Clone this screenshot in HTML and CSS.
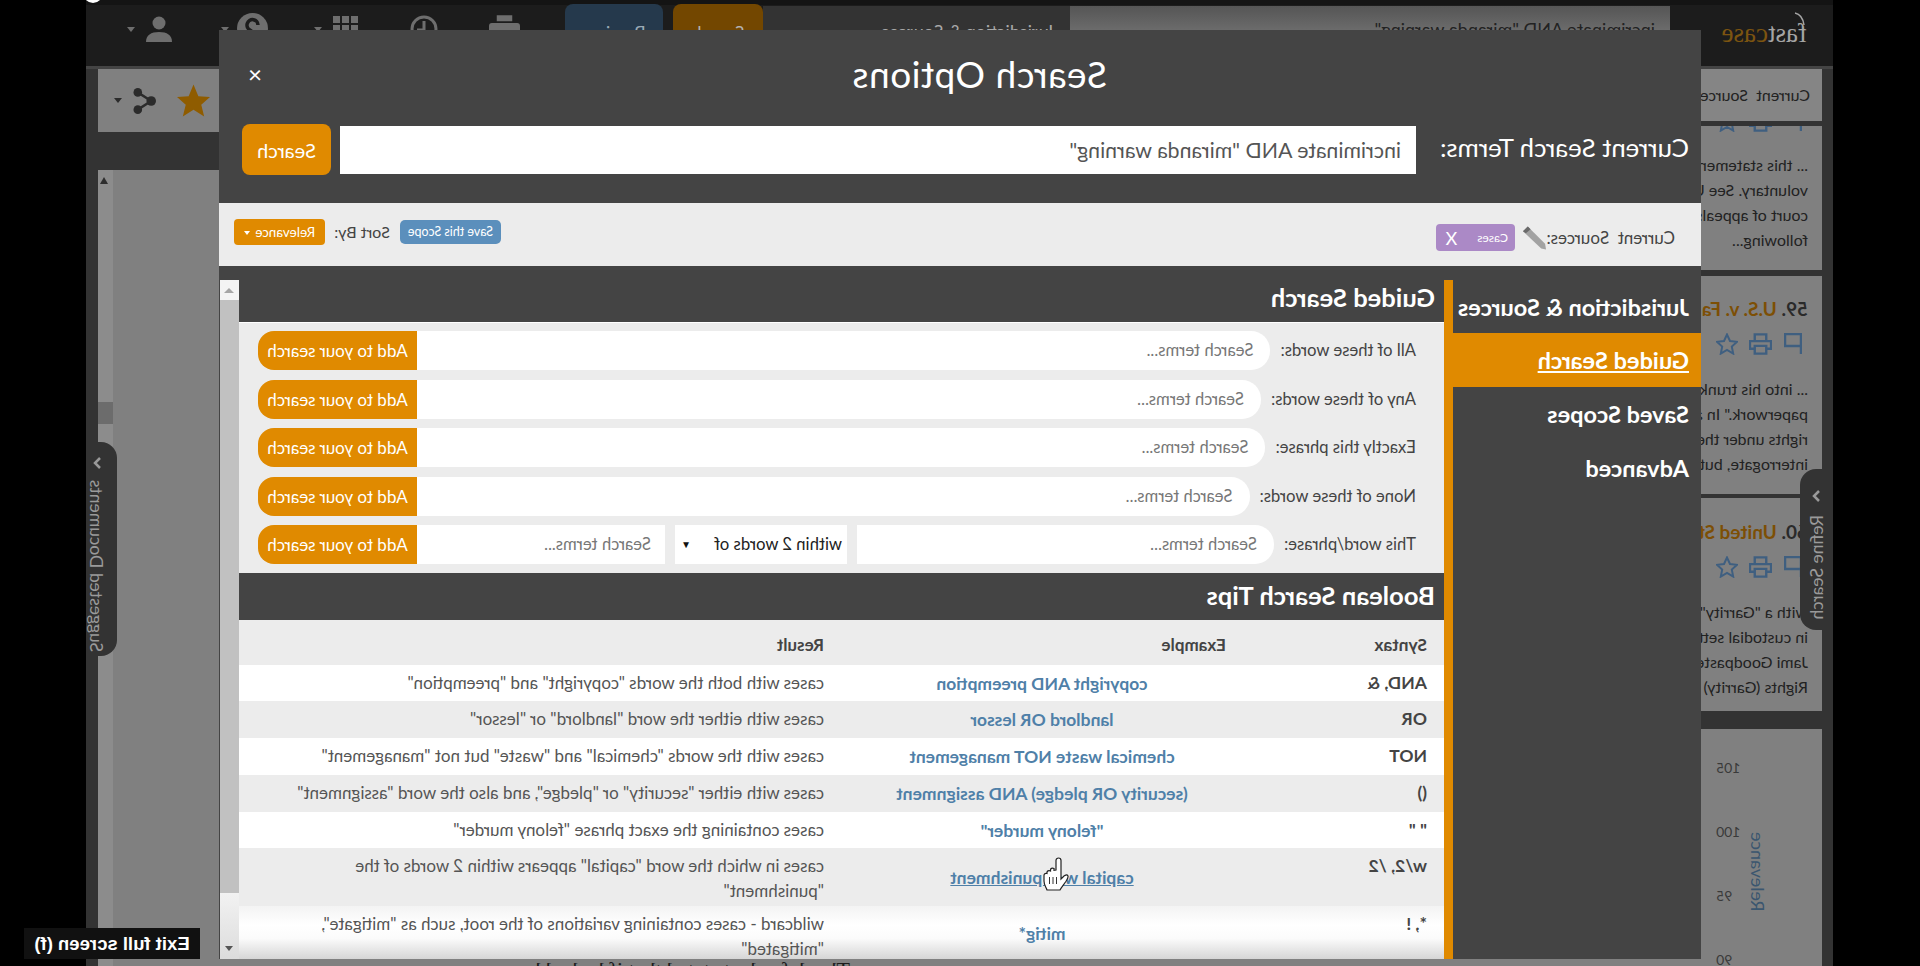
FILE: index.html
```html
<!DOCTYPE html>
<html lang="en">
<head>
<meta charset="utf-8">
<title>Search Options</title>
<link rel="stylesheet" href="styles.css">
</head>
<body>
<div class="stage">
  <div class="app">
    <header class="topbar">
      <div class="logo"><svg class="logo-swoosh" viewBox="0 0 12 14"><path d="M2 13C3 6 6 2 11 1" fill="none" stroke="#a5a5a5" stroke-width="1.500"/></svg><span class="logo-fast">fast</span><span class="logo-case">case</span></div>
      <div class="top-input">incriminate AND "miranda warning"</div>
      <div class="top-tabs">Jurisdiction &amp; Sources</div>
      <div class="top-btn top-search">Search</div>
      <div class="top-btn top-preview">Preview</div>
      <svg class="ti ti-print" viewBox="0 0 32 20"><path d="M8 0h16v6H8zM3 8h26a3 3 0 0 1 3 3v9H0v-9a3 3 0 0 1 3-3z" fill="#6e6e6e"/></svg>
      <svg class="ti ti-clock" viewBox="0 0 28 28"><circle cx="14" cy="14" r="12" fill="none" stroke="#6e6e6e" stroke-width="3"/><path d="M14 6v9h7" fill="none" stroke="#6e6e6e" stroke-width="3"/></svg>
      <svg class="ti ti-grid" viewBox="0 0 25 25"><path d="M0 0h7v7H0zM9 0h7v7H9zM18 0h7v7h-7zM0 9h7v7H0zM9 9h7v7H9zM18 9h7v7h-7zM0 18h7v7H0zM9 18h7v7H9zM18 18h7v7h-7z" fill="#6e6e6e"/></svg>
      <span class="caret ti-c1"></span>
      <svg class="ti ti-help" viewBox="0 0 31 31"><circle cx="15.5" cy="15.5" r="15.5" fill="#6e6e6e"/><path d="M10 12a5.500 5.500 0 1 1 8 5c-2 1-2.500 2-2.500 4" fill="none" stroke="#1c1c1c" stroke-width="3.500"/></svg>
      <span class="caret ti-c2"></span>
      <svg class="ti ti-user" viewBox="0 0 26 26"><circle cx="13" cy="7" r="6.500" fill="#6e6e6e"/><path d="M0 26c0-7 5-10 13-10s13 3 13 10z" fill="#6e6e6e"/></svg>
      <span class="caret ti-c3"></span>
    </header>
    <div class="content">
      <section class="results">
        <div class="cur-src">Current Sources: Cases</div>
        <article class="card card-58">
          <div class="res-icons res-icons-clip">
            <svg class="ri" viewBox="0 0 18 22"><path d="M1 1h16v12H1z M1 13v8" fill="none" stroke="#3f5f80" stroke-width="2.500"/></svg>
            <svg class="ri ri-p" viewBox="0 0 24 22"><path d="M6 8V1h12v7M6 16H1V8h22v8h-5M6 13h12v8H6z" fill="none" stroke="#3f5f80" stroke-width="2.500"/></svg>
            <svg class="ri ri-s" viewBox="0 0 22 22"><path d="M11 1.500l3 6.500 7 .8-5.200 4.800 1.400 7L11 17l-6.200 3.600 1.400-7L1 8.800 8 8z" fill="none" stroke="#3f5f80" stroke-width="2"/></svg>
          </div>
          <p class="snip">... this statement was<br>voluntary. See United<br>court of appeals<br>following...</p>
        </article>
        <article class="card card-59">
          <h3 class="case-h"><span class="num">59.</span> <span class="cname">U.S. v. Fa</span></h3>
          <div class="res-icons">
            <svg class="ri" viewBox="0 0 18 22"><path d="M1 1h16v12H1z M1 13v8" fill="none" stroke="#3f5f80" stroke-width="2.500"/></svg>
            <svg class="ri ri-p" viewBox="0 0 24 22"><path d="M6 8V1h12v7M6 16H1V8h22v8h-5M6 13h12v8H6z" fill="none" stroke="#3f5f80" stroke-width="2.500"/></svg>
            <svg class="ri ri-s" viewBox="0 0 22 22"><path d="M11 1.500l3 6.500 7 .8-5.200 4.800 1.400 7L11 17l-6.200 3.600 1.400-7L1 8.800 8 8z" fill="none" stroke="#3f5f80" stroke-width="2"/></svg>
          </div>
          <p class="snip">... into his trunk to get<br>paperwork." In addition<br>rights under the<br>interrogate, but he</p>
        </article>
        <article class="card card-60">
          <h3 class="case-h"><span class="num">60.</span> <span class="cname">United States</span></h3>
          <div class="res-icons">
            <svg class="ri" viewBox="0 0 18 22"><path d="M1 1h16v12H1z M1 13v8" fill="none" stroke="#3f5f80" stroke-width="2.500"/></svg>
            <svg class="ri ri-p" viewBox="0 0 24 22"><path d="M6 8V1h12v7M6 16H1V8h22v8h-5M6 13h12v8H6z" fill="none" stroke="#3f5f80" stroke-width="2.500"/></svg>
            <svg class="ri ri-s" viewBox="0 0 22 22"><path d="M11 1.500l3 6.500 7 .8-5.200 4.800 1.400 7L11 17l-6.200 3.600 1.400-7L1 8.800 8 8z" fill="none" stroke="#3f5f80" stroke-width="2"/></svg>
          </div>
          <p class="snip snip-60">with a "Garrity" warning<br>in custodial setting<br>Jami Goodpaster<br>Rights (Garrity)</p>
        </article>
        <div class="chart">
          <div class="ticks"><span>105</span><span>100</span><span>95</span><span>90</span></div>
          <span class="axis">Relevance</span>
        </div>
      </section>
      <section class="doc"><p class="doc-line">The defendant stated that if he had been advised of his rights and the officers</p></section>
      <aside class="side">
        <div class="side-tools">
          <svg class="st-star" viewBox="0 0 34 33"><path d="M17 0l5 12 12 1-9 8 3 12-11-7-11 7 3-12-9-8 12-1z" fill="#8f5c00"/></svg>
          <svg class="st-share" viewBox="0 0 24 28"><path d="M5 14L19 5M5 14l14 9" stroke="#2b2b2b" stroke-width="2.500" fill="none"/><circle cx="5" cy="14" r="5" fill="#2b2b2b"/><circle cx="19" cy="5" r="4.500" fill="#2b2b2b"/><circle cx="19" cy="23" r="4.500" fill="#2b2b2b"/></svg>
          <span class="caret caret-dark"></span>
        </div>
        <div class="side-pane">
          <div class="side-scroll"><span class="side-up"></span><span class="side-thumb"></span></div>
        </div>
      </aside>
    </div>
  </div>

  <div class="tab tab-refine">
    <svg class="tab-chev" viewBox="0 0 10 14"><path d="M2 2l5 5-5 5" fill="none" stroke="#9a9a9a" stroke-width="2.500"/></svg>
    <span class="tab-text">Refine Search</span>
  </div>
  <div class="tab tab-docs">
    <svg class="tab-chev" viewBox="0 0 10 14"><path d="M2 2l5 5-5 5" fill="none" stroke="#9a9a9a" stroke-width="2.500"/></svg>
    <span class="tab-text tab-up">Suggested Documents</span>
  </div>

  <div class="modal">
    <div class="m-head">
      <div class="m-title-row">
        <h1 class="m-title">Search Options</h1>
        <span class="m-close">×</span>
      </div>
      <div class="m-search-row">
        <label class="m-label">Current Search Terms:</label>
        <div class="m-input">incriminate AND "miranda warning"</div>
        <button class="m-btn">Search</button>
      </div>
    </div>
    <div class="m-band">
      <span class="band-label">Current&nbsp; Sources:</span>
      <svg class="band-pencil" viewBox="0 0 26 26"><path d="M20 1l5 5L6 24l-5 1 1-6z" fill="#a2a2a2"/><path d="M20 1l5 5-3 2-5-4z" fill="#6a6a6a"/></svg>
      <span class="chip"><span class="chip-t">Cases</span><span class="chip-x">X</span></span>
      <button class="scope-btn">Save this Scope</button>
      <span class="sort-label">Sort By:</span>
      <button class="rel-btn">Relevance <span class="rel-c"></span></button>
    </div>
    <div class="m-body">
      <nav class="m-nav">
        <a class="nav-item">Jurisdiction &amp; Sources</a>
        <a class="nav-item nav-active">Guided Search</a>
        <a class="nav-item">Saved Scopes</a>
        <a class="nav-item">Advanced</a>
      </nav>
      <div class="m-main">
        <h2 class="sec-h">Guided Search</h2>
        <div class="g-form">
          <div class="g-row"><span class="g-label">All of these words:</span><span class="g-input">Search terms...</span><button class="g-btn">Add to your search</button></div>
          <div class="g-row"><span class="g-label">Any of these words:</span><span class="g-input">Search terms...</span><button class="g-btn">Add to your search</button></div>
          <div class="g-row"><span class="g-label">Exactly this phrase:</span><span class="g-input">Search terms...</span><button class="g-btn">Add to your search</button></div>
          <div class="g-row"><span class="g-label">None of these words:</span><span class="g-input">Search terms...</span><button class="g-btn">Add to your search</button></div>
          <div class="g-row"><span class="g-label">This word/phrase:</span><span class="g-input">Search terms...</span><span class="g-select">within 2 words of<span class="sel-a">▼</span></span><span class="g-input g-input-b">Search terms...</span><button class="g-btn">Add to your search</button></div>
        </div>
        <h2 class="sec-h sec-h2">Boolean Search Tips</h2>
        <div class="tips">
          <div class="t-row t-head"><b class="t-s">Syntax</b><b class="t-eh">Example</b><b class="t-r">Result</b></div>
          <div class="t-row"><b class="t-s">AND, &amp;</b><a class="t-e">copyright AND preemption</a><span class="t-r">cases with both the words "copyright" and "preemption"</span></div>
          <div class="t-row"><b class="t-s">OR</b><a class="t-e">landlord OR lessor</a><span class="t-r">cases with either the word "landlord" or "lessor"</span></div>
          <div class="t-row"><b class="t-s">NOT</b><a class="t-e">chemical waste NOT management</a><span class="t-r">cases with the words "chemical" and "waste" but not "management"</span></div>
          <div class="t-row"><b class="t-s">()</b><a class="t-e">(security OR pledge) AND assignment</a><span class="t-r">cases with either "security" or "pledge", and also the word "assignment"</span></div>
          <div class="t-row"><b class="t-s">" "</b><a class="t-e">"felony murder"</a><span class="t-r">cases containing the exact phrase "felony murder"</span></div>
          <div class="t-row"><b class="t-s">w/2, /2</b><a class="t-e t-hover">capital w/2 punishment</a><span class="t-r">cases in which the word "capital" appears within 2 words of the "punishment"</span></div>
          <div class="t-row t-fade"><b class="t-s">*, !</b><a class="t-e">mitig*</a><span class="t-r">wildcard - cases containing variations of the root, such as "mitigate", "mitigated"</span></div>
        </div>
      </div>
      <div class="m-scroll">
        <span class="sb-btn"><span class="sb-up"></span></span>
        <span class="sb-thumb"></span>
        <span class="sb-rest"><span class="sb-down"></span></span>
      </div>
    </div>
  </div>

  <svg class="hand" viewBox="0 0 26 34"><path d="M8 16V3.500a2.500 2.500 0 0 1 5 0V13l2 .3V11.500c2-.8 3.500 0 3.500 1.500v1c2-.8 3.500 0 3.500 1.500v1c2-.5 3 .5 3 2V24c0 4-2 6-3 9H9c-1.500-3-3.500-5-5.500-8-1.500-2.500-3-4-2.500-6 1-2 3.500-.8 5 1l2 2z" fill="#fff" stroke="#222" stroke-width="1.200"/><path d="M12.500 20v7M16 20v7M19.500 20v7" stroke="#333" stroke-width="1"/></svg>
  <span class="dot"></span>
  <div class="toast">Exit full screen (f)</div>
</div>
</body>
</html>
```

FILE: styles.css
```css
* { box-sizing: border-box; }
html, body { margin: 0; padding: 0; height: 100%; overflow: hidden; background: #000; }
body { font-family: Lato, "Open Sans", sans-serif; }
h1, h2, h3, p { margin: 0; font-weight: inherit; }
button { font-family: inherit; border: 0; padding: 0; }

.stage { position: relative; width: 1920px; height: 966px; background: #000; overflow: hidden; transform: scaleX(-1); padding-left: 87px; padding-right: 86px; }
.app { width: 100%; height: 100%; background: #333; display: flex; flex-direction: column; }

/* top bar */
.topbar { position: relative; height: 66px; flex: none; background: #1c1c1c; border-top: 5px solid #141414; }
.logo { position: absolute; left: 26px; top: 15px; font-family: "Liberation Serif", serif; font-size: 27px; line-height: 27px; white-space: nowrap; }
.logo-swoosh { position: absolute; left: 1px; top: -8px; width: 12px; height: 14px; }
.logo-fast { color: #a5a5a5; }
.logo-case { color: #7c5410; }
.top-input { position: absolute; left: 163px; top: 1px; width: 600px; height: 40px; background: linear-gradient(#555, #7a7a7a); padding: 12px 15px; font-size: 18px; color: #222; }
.top-tabs { position: absolute; left: 763px; top: 1px; width: 307px; height: 40px; background: #333; color: #a8a8a8; font-size: 18px; padding: 14px 0 0 14px; white-space: nowrap; }
.top-btn { position: absolute; top: -1px; height: 42px; border-radius: 8px; font-size: 18px; text-align: center; padding-top: 17px; }
.top-search { left: 1070px; width: 90px; background: #734700; color: #b3b3b3; }
.top-preview { left: 1170px; width: 98px; background: #25394c; color: #9aa9b5; }
.ti { position: absolute; }
.ti-print { left: 1313px; top: 10px; width: 31px; height: 20px; }
.ti-clock { left: 1395px; top: 10px; width: 28px; height: 28px; }
.ti-grid { left: 1475px; top: 11px; width: 25px; height: 25px; }
.ti-help { left: 1565px; top: 8px; width: 31px; height: 31px; }
.ti-user { left: 1661px; top: 11px; width: 26px; height: 26px; }
.caret { display: block; width: 0; height: 0; border-left: 4.500px solid transparent; border-right: 4.500px solid transparent; border-top: 5px solid #6e6e6e; }
.ti-c1 { position: absolute; left: 1511px; top: 22px; }
.ti-c2 { position: absolute; left: 1604px; top: 22px; }
.ti-c3 { position: absolute; left: 1698px; top: 22px; }

/* page behind the modal */
.content { flex: 1; min-height: 0; display: flex; border-top: 3px solid #444; padding: 0 12px 0 11px; }
.results { flex: none; width: 400px; display: flex; flex-direction: column; color: #222; font-size: 16px; }
.cur-src { flex: none; height: 52px; background: #858585; padding: 16px 12px; font-size: 16px; word-spacing: 4px; white-space: nowrap; }
.card { flex: none; background: #808080; white-space: nowrap; }
.card-58 { margin-top: 5px; height: 144px; overflow: hidden; }
.card-59 { margin-top: 6px; height: 218px; padding-top: 18px; }
.card-60 { margin-top: 4px; height: 213px; padding-top: 19px; }
.case-h { height: 30px; font-size: 19px; line-height: 30px; padding-left: 14px; font-weight: 700; }
.num { color: #2a2a2a; }
.cname { color: #7d4f05; }
.res-icons { display: flex; align-items: center; margin: 9px 0 0 20px; height: 22px; }
.res-icons-clip { margin-top: -16px; }
.ri { width: 18px; height: 22px; }
.ri-p { width: 23px; margin-left: 12px; }
.ri-s { width: 22px; margin-left: 11px; }
.snip { margin-top: 21px; padding-left: 14px; line-height: 25px; font-size: 16px; }
.snip-60 { padding-left: 14px; }
.card-58 .snip { margin-top: 20px; }
.chart { position: relative; margin-top: 18px; flex: 1; min-height: 0; overflow: hidden; background: #808080; }
.ticks { display: flex; flex-direction: column; align-items: flex-end; gap: 46px; width: 106px; padding: 30px 0 0 0; font-size: 14px; line-height: 18px; color: #3a3a3a; }
.axis { position: absolute; left: 53px; top: 103px; writing-mode: vertical-rl; transform: rotate(180deg); font-size: 18px; color: #3b566f; }
.doc { flex: 1; background: #808080; display: flex; flex-direction: column; justify-content: flex-end; overflow: hidden; }
.doc-line { font-family: "Liberation Serif", serif; font-size: 22px; line-height: 24px; height: 8px; margin: 0 0 0 572px; color: #1c1c1c; white-space: nowrap; }
.side { flex: none; width: 400px; display: flex; flex-direction: column; }
.side-tools { flex: none; height: 63px; background: #808080; display: flex; align-items: center; padding-left: 288px; }
.st-star { width: 33px; height: 33px; }
.st-share { width: 23px; height: 28px; margin-left: 21px; }
.caret-dark { border-top-color: #2b2b2b; margin-left: 11px; }
.side-pane { margin-top: 38px; flex: 1; background: #808080; }
.side-scroll { position: relative; display: block; height: 100%; width: 15px; margin-left: auto; background: #8c8c8c; }
.side-up { position: absolute; left: 5px; top: 7px; width: 0; height: 0; border-left: 4px solid transparent; border-right: 4px solid transparent; border-bottom: 7px solid #2e2e2e; }
.side-thumb { position: absolute; left: 0; top: 232px; width: 15px; height: 22px; background: #6c6c6c; }

/* side tabs */
.tab { position: absolute; background: #333; color: #9a9a9a; display: flex; flex-direction: column; align-items: center; }
.tab-refine { left: 87px; top: 469px; width: 33px; height: 161px; border-radius: 0 16px 16px 0; padding-top: 20px; gap: 12px; }
.tab-docs { left: 1803px; top: 442px; width: 31px; height: 214px; border-radius: 16px 0 0 16px; padding: 14px 0 0 9px; gap: 10px; }
.tab-chev { width: 10px; height: 14px; flex: none; }
.tab-text { writing-mode: vertical-rl; font-size: 17.500px; white-space: nowrap; }
.tab-up { transform: rotate(180deg); }

/* modal */
.modal { position: absolute; left: 219px; top: 30px; width: 1482px; height: 929px; background: #444; display: flex; flex-direction: column; overflow: hidden; }
.m-head { height: 173px; flex: none; padding: 0 23px 0 12px; }
.m-title-row { height: 94px; display: flex; align-items: flex-start; }
.m-title { margin: 19px 0 0 582px; color: #fff; font-size: 37px; line-height: 50px; font-weight: 400; letter-spacing: .5px; }
.m-close { margin: 29px 0 0 auto; padding-right: 6px; color: #fff; font-size: 24px; line-height: 30px; }
.m-search-row { display: flex; align-items: center; height: 51px; }
.m-label { width: 273px; padding-bottom: 6px; color: #fff; font-size: 25.800px; font-weight: 400; white-space: nowrap; }
.m-input { width: 1076px; height: 48px; background: #fff; color: #555; font-size: 21.300px; line-height: 48px; padding-left: 15px; }
.m-btn { width: 89px; height: 51px; margin-left: 9px; background: #e08a00; color: #fff; border-radius: 8px; font-size: 20px; }
.m-band { height: 63px; flex: none; background: #ececec; display: flex; align-items: center; padding: 0 15px 0 26px; color: #444; }
.band-label { width: 128px; font-size: 17px; margin-top: 6px; white-space: nowrap; }
.band-pencil { width: 25px; height: 26px; margin-top: 6px; }
.chip { display: flex; align-items: center; width: 79px; height: 27px; margin: 6px 0 0 7px; background: #ab89c6; color: #fff; border-radius: 4px; padding-left: 7px; }
.chip-t { font-size: 12px; }
.chip-x { font-size: 18px; margin-left: 20px; }
.scope-btn { width: 101px; height: 24px; margin: -6px 0 0 935px; background: #5b8fbc; color: #fff; font-size: 12.500px; border-radius: 5px; white-space: nowrap; }
.sort-label { width: 56px; margin: -6px 0 0 10px; font-size: 16px; white-space: nowrap; }
.rel-btn { width: 91px; height: 26px; margin: -6px 0 0 9px; background: #e08a00; color: #fff; font-size: 13.500px; border-radius: 4px; white-space: nowrap; }
.rel-c { display: inline-block; width: 0; height: 0; margin-left: 2px; vertical-align: middle; border-left: 3px solid transparent; border-right: 3px solid transparent; border-top: 4px solid #fff; }
.m-body { flex: 1; min-height: 0; display: flex; padding-top: 14px; }
.m-nav { width: 257px; flex: none; border-right: 9px solid #e08a00; }
.nav-item { display: block; height: 54px; padding: 12px 0 0 12px; color: #fff; font-size: 23.500px; line-height: 30px; font-weight: 700; white-space: nowrap; }
.nav-item:first-child { height: 53px; }
.nav-active { width: 257px; background: #e08a00; text-decoration: underline; }
.m-main { width: 1205px; flex: none; overflow: hidden; }
.sec-h { height: 43px; padding-left: 9px; color: #fff; font-size: 25.500px; line-height: 34px; font-weight: 700; border-bottom: 1px solid #fff; white-space: nowrap; }
.sec-h2 { height: 47px; line-height: 44px; border-bottom: 0; padding-left: 9px; }
.g-form { height: 250px; background: #ececec; padding: 8px 19px 0 28px; display: flex; flex-direction: column; gap: 9.500px; }
.g-row { display: flex; height: 39px; align-items: stretch; font-size: 16.700px; color: #444; }
.g-label { line-height: 39px; white-space: nowrap; margin-right: 10px; }
.g-input { flex: 1; min-width: 0; background: #fff; border-radius: 19px 0 0 19px; padding-left: 17px; line-height: 39px; color: #777; white-space: nowrap; }
.g-row:last-child .g-input-b { flex: none; width: 248px; margin-left: 10px; border-radius: 0; padding-left: 14px; }
.g-select { position: relative; flex: none; width: 172px; margin-left: 10px; background: #fff; padding-left: 5px; line-height: 39px; color: #222; white-space: nowrap; }
.sel-a { position: absolute; right: 6px; top: 0; font-size: 10px; color: #111; }
.g-btn { flex: none; width: 159px; background: #e08a00; color: #fff; border-radius: 0 16px 16px 0; font-size: 17px; white-space: nowrap; }
.tips { background: #fff; }
.t-row { display: grid; grid-template-columns: 206px 392px 1fr; height: 37px; line-height: 25px; font-size: 17px; color: #555; background: #fff; }
.t-row:nth-child(odd) { background: #ececec; }
.t-row:nth-child(2), .t-row:nth-child(6) { height: 36px; }
.t-row:nth-child(7) { height: 58px; }
.t-row:nth-child(8) { height: 54px; }
.t-head { height: 45px; padding-top: 7px; }
.t-s { padding: 5px 0 0 17px; font-size: 17.500px; color: #444; }
.t-e { align-self: center; text-align: center; color: #4f80a8; font-weight: 700; font-size: 17.500px; }
.t-eh { padding-left: 12px; padding-top: 5px; font-size: 17px; color: #444; }
.t-r { padding: 5px 48px 0 22px; }
.t-head .t-r { font-weight: 700; color: #444; }
.t-hover { text-decoration: underline; }
.t-row.t-fade { background: linear-gradient(#f3f3f3, #fff 35%, #fbfbfb 60%, #d4d4d4); }
.m-scroll { width: 19px; flex: none; display: flex; flex-direction: column; }
.sb-btn { height: 20px; background: #f4f4f4; display: flex; align-items: center; justify-content: center; }
.sb-up { width: 0; height: 0; border-left: 5px solid transparent; border-right: 5px solid transparent; border-bottom: 5px solid #a6a6a6; }
.sb-thumb { height: 593px; background: #c1c1c1; }
.sb-rest { flex: 1; background: linear-gradient(#f2f2f2, #dcdcdc); display: flex; align-items: flex-end; justify-content: center; padding-bottom: 8px; }
.sb-down { width: 0; height: 0; border-left: 4px solid transparent; border-right: 4px solid transparent; border-top: 5px solid #555; }

/* overlays */
.hand { position: absolute; left: 851px; top: 857px; width: 26px; height: 34px; }
.dot { position: absolute; left: 1817px; top: -17px; width: 20px; height: 20px; background: #fff; border-radius: 50%; }
.toast { position: absolute; left: 1720px; top: 928px; width: 176px; height: 31px; background: #111; color: #fff; font-family: "Liberation Sans", sans-serif; font-weight: 700; font-size: 18.500px; line-height: 31px; text-align: center; white-space: nowrap; }
```
